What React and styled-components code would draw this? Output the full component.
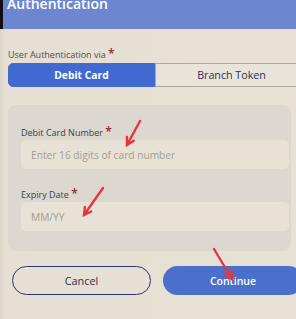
import React, {useState} from 'react'
import styled, {createGlobalStyle} from 'styled-components';

const GlobalStyle = createGlobalStyle`
    html, body {
        margin: 0;
        padding: 0;
        background: #e6e0d4;
    }
    * { box-sizing: border-box; }
`

// red annotation arrows drawn over the screenshot
const arrows = [
    {x1: 140, y1: 121, x2: 127, y2: 145},
    {x1: 103, y1: 188, x2: 84, y2: 215},
    {x1: 214, y1: 249, x2: 232, y2: 279},
];

const Arrow = ({x1, y1, x2, y2}) => {
    const ang = Math.atan2(y2 - y1, x2 - x1);
    const len = 8;
    const a1 = ang + Math.PI - 0.5;
    const a2 = ang + Math.PI + 0.5;
    return (
        <g stroke="#e8343c" strokeWidth="2.4" strokeLinecap="round" fill="none">
            <line x1={x1} y1={y1} x2={x2} y2={y2} />
            <polyline points={`${x2 + len * Math.cos(a1)},${y2 + len * Math.sin(a1)} ${x2},${y2} ${x2 + len * Math.cos(a2)},${y2 + len * Math.sin(a2)}`} />
        </g>
    )
}

const App = () => {
    const [mode, setMode] = useState('debit');

    return (
        <>
        <GlobalStyle />
        <Page>
            <Header>
                <Title>Authentication</Title>
            </Header>
            <Content>
                <Label>User Authentication via <Star>*</Star></Label>
                <Toggle>
                    <Segment active={mode === 'debit'} first onClick={() => setMode('debit')}>Debit Card</Segment>
                    <Segment active={mode === 'branch'} onClick={() => setMode('branch')}>Branch Token</Segment>
                </Toggle>
                <Panel>
                    <FieldLabel>Debit Card Number <Star>*</Star></FieldLabel>
                    <Input placeholder="Enter 16 digits of card number" />
                    <FieldLabel spaced>Expiry Date <Star>*</Star></FieldLabel>
                    <Input placeholder="MM/YY" />
                </Panel>
                <Buttons>
                    <Button>Cancel</Button>
                    <Button primary>Continue</Button>
                </Buttons>
            </Content>
            <Overlay width="296" height="319" viewBox="0 0 296 319">
                {arrows.map((a, i) => <Arrow key={i} {...a} />)}
            </Overlay>
        </Page>
        </>
    )
}

const Page = styled.div`
    position: relative;
    width: 296px;
    height: 319px;
    overflow: hidden;
    display: flex;
    flex-direction: column;
    background: linear-gradient(90deg, #dcd6ca 0px, #e6e0d4 6px, #e7e1d5 100%);
    font-family: "Open Sans", "Liberation Sans", sans-serif;
`

const Header = styled.div`
    height: 29px;
    flex: none;
    background: #6c87d0;
    border-left: 3px solid #111;
    padding-left: 4px;
    overflow: hidden;
`

const Title = styled.div`
    margin-top: -5px;
    color: #fff;
    font-size: 14px;
    font-weight: 600;
    line-height: 18px;
`

const Content = styled.div`
    padding-left: 8px;
    display: flex;
    flex-direction: column;
`

const Label = styled.div`
    margin-top: 18px;
    height: 16px;
    font-size: 9px;
    line-height: 14px;
    color: #4d4c52;
`

const Star = styled.span`
    color: #8a2b2b;
    font-size: 12px;
    font-weight: 600;
`

const Toggle = styled.div`
    display: flex;
    width: 300px;
    height: 24px;
`

const Segment = styled.button`
    flex: none;
    width: ${p => p.first ? '147px' : '153px'};
    height: 24px;
    padding: 0;
    font-family: inherit;
    font-size: ${p => p.active ? '10.3px' : '10.7px'};
    cursor: pointer;
    border: 1px solid ${p => p.active ? '#4169cf' : '#aca89f'};
    border-radius: ${p => p.first ? '5px 0 0 5px' : '0'};
    background: ${p => p.active ? '#4169cf' : '#e9e4d9'};
    color: ${p => p.active ? '#fff' : '#2b2f5c'};
    font-weight: ${p => p.active ? 700 : 500};
`

const Panel = styled.div`
    margin-top: 18px;
    width: 283px;
    padding: 20px 1px 20px 13px;
    border-radius: 8px;
    background: #dcd8cf;
    display: flex;
    flex-direction: column;
`

const FieldLabel = styled.div`
    margin-top: ${p => p.spaced ? '18px' : '0'};
    height: 15px;
    font-size: 9px;
    line-height: 14px;
    color: #3f3e45;
`

const Input = styled.input`
    width: 268px;
    height: 29px;
    border: none;
    outline: none;
    border-radius: 5px;
    background: #e8e2d6;
    padding: 0 10px;
    font-family: inherit;
    font-size: 10.2px;
    color: #333;
    &::placeholder {
        color: #a29d94;
    }
`

const Buttons = styled.div`
    margin-top: 15px;
    margin-left: 4px;
    display: flex;
    gap: 12px;
`

const Button = styled.button`
    flex: none;
    width: ${p => p.primary ? '140px' : '139px'};
    height: 29px;
    border-radius: 15px;
    font-family: inherit;
    font-size: ${p => p.primary ? '10.5px' : '10.8px'};
    cursor: pointer;
    border: ${p => p.primary ? 'none' : '1.5px solid #2e3270'};
    background: ${p => p.primary ? '#4a70cc' : 'transparent'};
    color: ${p => p.primary ? '#fff' : '#2f2f3a'};
    font-weight: ${p => p.primary ? 600 : 500};
`

const Overlay = styled.svg`
    position: absolute;
    left: 0;
    top: 0;
    pointer-events: none;
`

export default App;
